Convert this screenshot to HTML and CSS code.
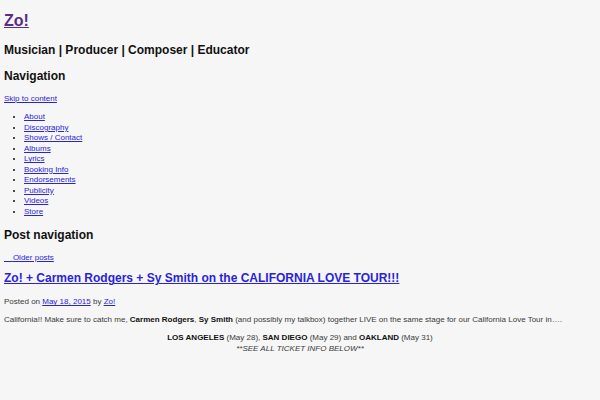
FILE: index.html
```html
<!DOCTYPE html>
<html>
<head>
<meta charset="utf-8">
<link rel="stylesheet" href="styles.css">
</head>
<body>
<header class="site-header">
  <h1 class="site-title"><a class="visited" href="#">Zo!</a></h1>
  <h2 class="site-desc">Musician | Producer | Composer | Educator</h2>
</header>
<nav class="main-nav">
  <h2 class="sec-title">Navigation</h2>
  <a class="skip" href="#">Skip to content</a>
  <ul class="menu">
    <li><a href="#">About</a></li>
    <li><a href="#">Discography</a></li>
    <li><a href="#">Shows / Contact</a></li>
    <li><a href="#">Albums</a></li>
    <li><a href="#">Lyrics</a></li>
    <li><a href="#">Booking Info</a></li>
    <li><a href="#">Endorsements</a></li>
    <li><a href="#">Publicity</a></li>
    <li><a href="#">Videos</a></li>
    <li><a href="#">Store</a></li>
  </ul>
</nav>
<nav class="post-nav">
  <h2 class="sec-title">Post navigation</h2>
  <a class="older" href="#"><span class="arrow">&nbsp;&nbsp;&nbsp;&nbsp;</span>Older posts</a>
</nav>
<article class="post">
  <h2 class="post-title"><a href="#">Zo! + Carmen Rodgers + Sy Smith on the CALIFORNIA LOVE TOUR!!!</a></h2>
  <div class="meta">Posted on <a href="#">May 18, 2015</a> by <a href="#">Zo!</a></div>
  <p class="excerpt">California!! Make sure to catch me, <b>Carmen Rodgers</b>, <b>Sy Smith</b> (and possibly my talkbox) together LIVE on the same stage for our California Love Tour in….</p>
  <p class="center"><b>LOS ANGELES</b> (May 28), <b>SAN DIEGO</b> (May 29) and <b>OAKLAND</b> (May 31)<br><em>**SEE ALL TICKET INFO BELOW**</em></p>
</article>
</body>
</html>
```
FILE: styles.css
```css
html { background: #f6f6f6; }
body {
  margin: 0;
  padding: 4px;
  font-family: "Liberation Sans", Arial, sans-serif;
  font-size: 8px;
  line-height: 10.45px;
  color: #3a3a3a;
}
a { color: #2a24d6; }
a.visited { color: #5a2a8c; }
h1, h2 { color: #111; margin: 0; font-weight: bold; }
.site-title { font-size: 16px; line-height: 20px; margin-top: 7px; }
.site-desc { font-size: 12px; line-height: 16px; margin-top: 11px; }
.sec-title { font-size: 12px; line-height: 16px; }
.main-nav .sec-title { margin-top: 10px; }
.skip { display: inline-block; margin-top: 10px; }
.menu { margin: 8px 0 0; padding-left: 20px; }
.menu li::marker { color: #111; }
.post-nav .sec-title { margin-top: 10px; }
.older { display: inline-block; margin-top: 10px; }
.post-title { font-size: 12px; line-height: 16px; margin-top: 7px; }
.meta { margin-top: 11px; }
.excerpt { margin: 7px 0 0; }
.center { text-align: center; margin: 8px 0 0; }
.center b { color: #111; }
.excerpt b { color: #111; }
```
